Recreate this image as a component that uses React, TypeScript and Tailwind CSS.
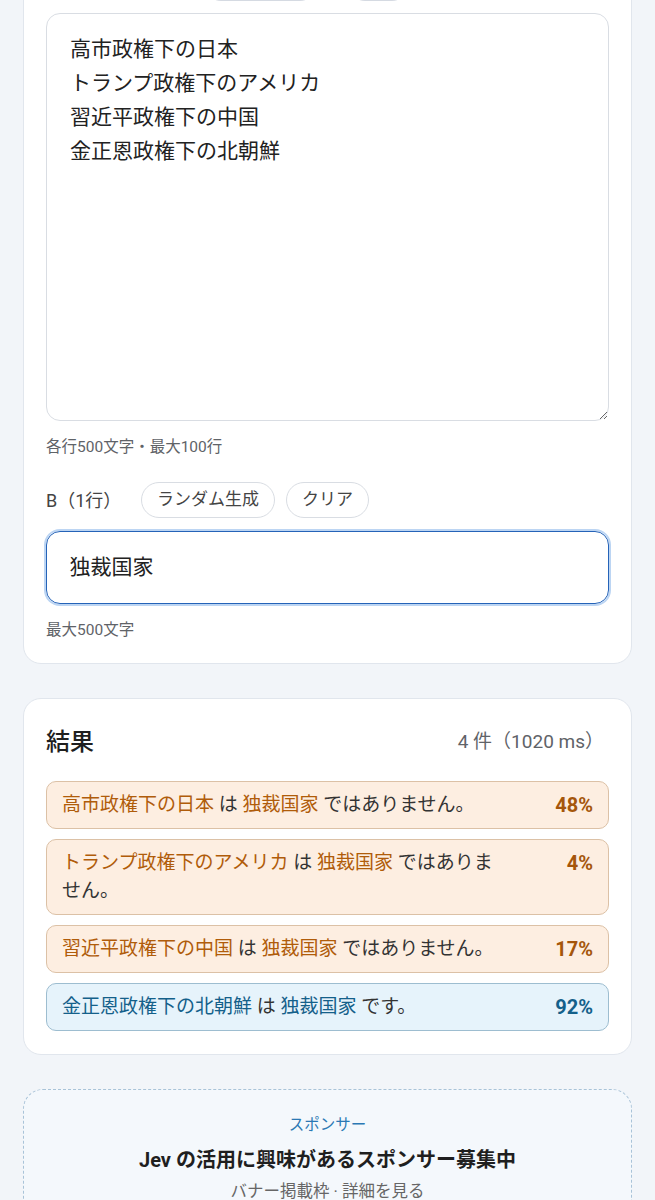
import React from "react";

const font = { fontFamily: '"Roboto", "Noto Sans CJK JP", sans-serif' };

type Row = { a: string; b: string; neg: boolean; pct: string };
const rows: Row[] = [
  { a: "高市政権下の日本", b: "独裁国家", neg: true, pct: "48%" },
  { a: "トランプ政権下のアメリカ", b: "独裁国家", neg: true, pct: "4%" },
  { a: "習近平政権下の中国", b: "独裁国家", neg: true, pct: "17%" },
  { a: "金正恩政権下の北朝鮮", b: "独裁国家", neg: false, pct: "92%" },
];

export default function App() {
  return (
    <div className="min-h-screen bg-[#f2f5f9] overflow-hidden pb-10" style={font}>
      {/* Input card */}
      <div className="mx-[23px] -mt-[60px] bg-white border border-[#e1e6ed] rounded-[18px] px-[22px] pt-[24px] pb-[22px]">
        <div className="flex gap-[29px] pl-[157px] mb-[12px]">
          <div className="w-[115px] h-[36px] rounded-full bg-[#e6e9ee] border border-[#d5dae2]" />
          <div className="w-[63px] h-[36px] rounded-full bg-[#e6e9ee] border border-[#d5dae2]" />
        </div>
        <textarea
          readOnly
          defaultValue={"高市政権下の日本\nトランプ政権下のアメリカ\n習近平政権下の中国\n金正恩政権下の北朝鮮"}
          className="block w-full h-[408px] border border-[#d9dde3] rounded-[14px] px-[23px] pt-[18px] text-[21px] leading-[34px] text-[#222] outline-none resize-y"
          style={font}
        />
        <div className="mt-[15px] text-[15.5px] leading-[22px] text-[#5f6368]">各行500文字・最大100行</div>
        <div className="mt-[24px] flex items-center h-[36px]">
          <span className="text-[18px] text-[#444] w-[95px]">B（1行）</span>
          <button className="h-[36px] px-[15px] rounded-full border border-[#d9dde3] text-[17px] text-[#444] bg-white">ランダム生成</button>
          <button className="ml-[11px] h-[36px] px-[15px] rounded-full border border-[#d9dde3] text-[17px] text-[#444] bg-white">クリア</button>
        </div>
        <div className="mt-[13px] h-[73px] rounded-[14px] border-[1.5px] border-[#2563b8] shadow-[0_0_0_2px_#bcd5f3] flex items-center px-[22.5px] text-[21px] text-[#222]">
          独裁国家
        </div>
        <div className="mt-[15px] text-[15.5px] leading-[22px] text-[#5f6368]">最大500文字</div>
      </div>

      {/* Results card */}
      <div className="mx-[23px] mt-[34px] bg-white border border-[#e1e6ed] rounded-[18px] px-[22px] pt-[28px] pb-[23px]">
        <div className="flex items-center justify-between h-[30px] pr-[5px]">
          <span className="text-[24px] font-medium text-[#1f1f1f]">結果</span>
          <span className="text-[19px] text-[#5f6368]">4 件（1020 ms）</span>
        </div>
        <div className="mt-[24px] flex flex-col gap-[10px]">
          {rows.map((r, i) => (
            <div
              key={i}
              className={
                "flex items-start gap-[20px] rounded-[10px] border px-[15px] py-[9px] " +
                (r.neg ? "bg-[#fdeee1] border-[#dcc1a6]" : "bg-[#e6f3fb] border-[#9dbdd0]")
              }
            >
              <div className="flex-1 text-[19px] leading-[28px] text-[#333]">
                <span className={r.neg ? "text-[#b05c0a]" : "text-[#14608a]"}>{r.a}</span> は{" "}
                <span className={r.neg ? "text-[#b05c0a]" : "text-[#14608a]"}>{r.b}</span>{" "}
                {r.neg ? "ではありません。" : "です。"}
              </div>
              <div
                className={
                  "w-[64px] text-right text-[20px] leading-[28px] font-bold " +
                  (r.neg ? "text-[#a5560b]" : "text-[#14608a]")
                }
              >
                {r.pct}
              </div>
            </div>
          ))}
        </div>
      </div>

      {/* Sponsor */}
      <div className="mx-[23px] mt-[34px] rounded-[20px] border border-dashed border-[#a9c3d8] bg-[#f4f8fc] pt-[24px] pb-[40px] flex flex-col items-center">
        <div className="text-[15.5px] leading-[22px] text-[#2b78b4]">スポンサー</div>
        <div className="mt-[11px] text-[20px] leading-[26px] font-bold text-[#1f1f1f]">Jev の活用に興味があるスポンサー募集中</div>
        <div className="mt-[8px] text-[16.5px] leading-[22px] text-[#666]">バナー掲載枠 · 詳細を見る</div>
      </div>
    </div>
  );
}
